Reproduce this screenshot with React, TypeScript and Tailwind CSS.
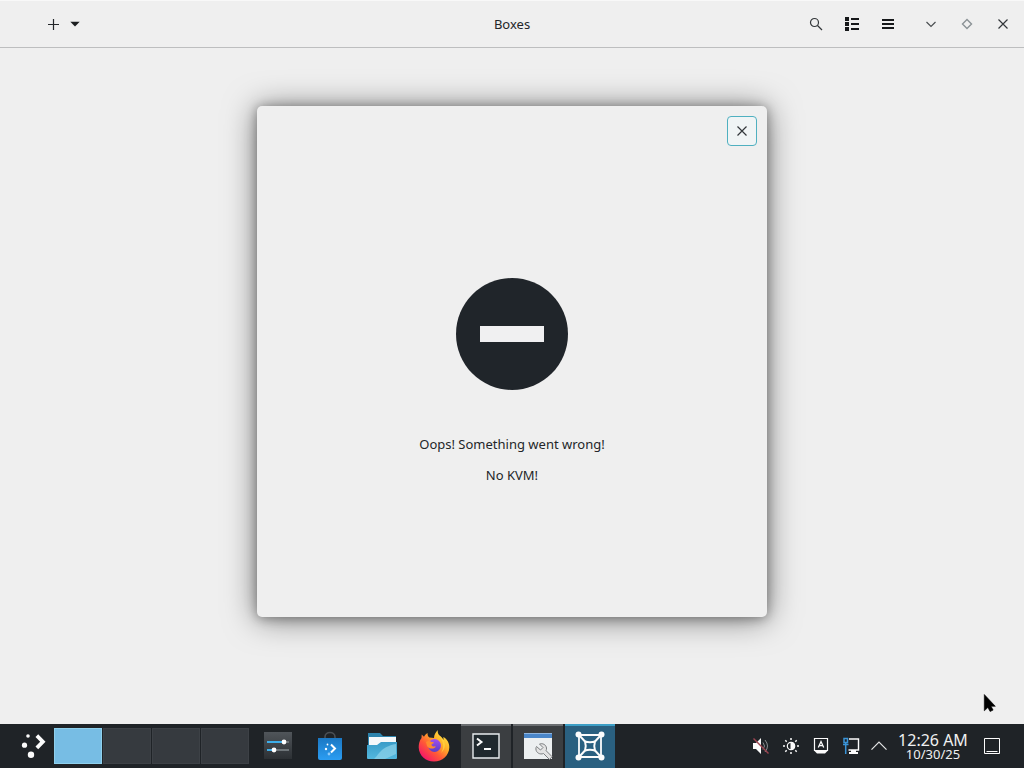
import React from "react";

const launchers = [
  { name: "System Settings", icon: <SettingsIcon /> },
  { name: "Discover", icon: <DiscoverIcon /> },
  { name: "Files", icon: <FilesIcon /> },
  { name: "Firefox", icon: <FirefoxIcon /> },
];

const tray = [
  { name: "Volume muted", icon: <VolumeIcon /> },
  { name: "Brightness", icon: <BrightnessIcon /> },
  { name: "Keyboard", icon: <KeyboardIcon /> },
  { name: "Network", icon: <NetworkIcon /> },
];

export default function App() {
  return (
    <div className="relative flex min-h-screen flex-col bg-[#efefef] font-['Noto_Sans',sans-serif] text-[13px] text-[#232629]">
      <Header />
      <main className="flex flex-1 items-start justify-center px-4 pt-[58px] pb-[107px]">
        <ErrorDialog />
      </main>
      <Taskbar />
      <Cursor />
    </div>
  );
}

function Header() {
  return (
    <header className="grid h-12 grid-cols-[1fr_auto_1fr] items-center border-t border-b border-t-[#f8f8f8] border-b-[#bdbebf] bg-[#efefef]">
      <div className="flex items-center pl-[38px]">
        <button aria-label="New box" className="flex h-9 items-center gap-[10px] px-2">
          <svg width="14" height="14" viewBox="0 0 14 14" stroke="#232629" strokeWidth="1.2">
            <path d="M7.5 2v11M2 7.5h11" />
          </svg>
          <svg width="10" height="6" viewBox="0 0 10 6" fill="#1b1e20">
            <path d="M0.3 0.7h9.4L5 5.5z" />
          </svg>
        </button>
      </div>
      <h1 className="pt-px">Boxes</h1>
      <div className="flex items-center justify-end pr-[3px]">
        <button aria-label="Search" className="flex size-9 items-center justify-center">
          <svg width="16" height="16" viewBox="0 0 16 16" fill="none" stroke="#33373a" strokeWidth="1.2">
            <circle cx="6.5" cy="6.5" r="4" />
            <path d="M9.5 9.5l4.5 4.5" />
          </svg>
        </button>
        <button aria-label="List view" className="flex size-9 items-center justify-center">
          <svg width="16" height="16" viewBox="0 0 16 16" fill="#16181a">
            <path d="M1 1h4v4H1zM1 6h4v4H1zM1 11h4v4H1zM7 2h8v2H7zM7 7h8v2H7zM7 12h8v2H7z" />
          </svg>
        </button>
        <button aria-label="Menu" className="flex size-9 items-center justify-center">
          <svg width="16" height="16" viewBox="0 0 16 16" fill="#16181a">
            <path d="M2 3h12v2H2zM2 7h12v2H2zM2 11h12v2H2z" />
          </svg>
        </button>
        <div className="flex pl-[7px]">
          <button aria-label="Minimize" className="flex size-9 items-center justify-center">
            <svg width="16" height="16" viewBox="0 0 16 16" fill="none" stroke="#4a4e51" strokeWidth="1.2">
              <path d="M3.5 6l4.5 4.5L12.5 6" />
            </svg>
          </button>
          <button aria-label="Maximize" className="flex size-9 items-center justify-center">
            <svg width="16" height="16" viewBox="0 0 16 16" fill="none" stroke="#8b9296" strokeWidth="1.4">
              <path d="M8 3.5l4.5 4.5L8 12.5 3.5 8z" />
            </svg>
          </button>
          <button aria-label="Close window" className="flex size-9 items-center justify-center">
            <CloseIcon />
          </button>
        </div>
      </div>
    </header>
  );
}

function ErrorDialog() {
  return (
    <section
      role="dialog"
      aria-label="Error"
      className="relative flex min-h-[511px] w-full max-w-[510px] flex-col items-center rounded-[5px] bg-[#efefef] pt-[172px] shadow-[0_2px_32px_rgba(0,0,0,0.5),0_1px_12px_rgba(0,0,0,0.35)]"
    >
      <button
        aria-label="Close"
        className="absolute top-[10px] right-[10px] flex size-[30px] items-center justify-center rounded-[4px] border border-[#4fb0c0] bg-[#f0f4f5]"
      >
        <CloseIcon />
      </button>
      <svg width="112" height="112" viewBox="0 0 112 112">
        <circle cx="56" cy="56" r="56" fill="#20252a" />
        <path d="M24 48h64v16H24z" fill="#f0f0f1" />
      </svg>
      <p className="mt-[45px] leading-[18px]">Oops! Something went wrong!</p>
      <p className="mt-[13px] leading-[18px]">No KVM!</p>
    </section>
  );
}

function Taskbar() {
  return (
    <footer className="flex h-11 items-stretch bg-[#1f2327] text-[#fcfcfc]">
      <button aria-label="Application launcher" className="flex w-[54px] items-center pl-[21px]">
        <svg width="26" height="26" viewBox="0 0 26 26" fill="#fcfcfc">
          <circle cx="7" cy="3" r="1.8" />
          <circle cx="3.5" cy="12.2" r="2.6" />
          <circle cx="10" cy="21.8" r="3.2" />
          <path d="M17.2 1.2L24.5 8.7l-7.3 7.5-2.7-2.7 4.7-4.8-4.7-4.8z" />
        </svg>
      </button>

      <div className="flex gap-px py-1">
        <button aria-label="Desktop 1" className="w-12 border border-[#8fd0ec] bg-[#77bde4]" />
        <button aria-label="Desktop 2" className="w-12 border border-[#3d4146] bg-[#363a3f]" />
        <button aria-label="Desktop 3" className="w-12 border border-[#3d4146] bg-[#363a3f]" />
        <button aria-label="Desktop 4" className="w-12 border border-[#3d4146] bg-[#363a3f]" />
      </div>

      <nav className="flex gap-[2px] pl-1">
        {launchers.map((item) => (
          <button key={item.name} aria-label={item.name} className="flex w-[50px] items-center justify-center">
            {item.icon}
          </button>
        ))}
        <button aria-label="Konsole" className="flex w-[50px] items-center justify-center border-t-2 border-[#6b6e71] bg-[#3b3e41] pb-[2px]">
          <KonsoleIcon />
        </button>
        <button aria-label="Window tools" className="flex w-[50px] items-center justify-center border-t-2 border-[#6b6e71] bg-[#3b3e41] pb-[2px]">
          <ToolsIcon />
        </button>
        <button aria-label="Boxes" className="flex w-[50px] items-center justify-center border-t-2 border-[#3d9fc6] bg-[#2a6080] pb-[2px]">
          <BoxesIcon />
        </button>
      </nav>

      <div className="ml-auto flex pr-[14px]">
        {tray.map((item) => (
          <button key={item.name} aria-label={item.name} className="flex w-[30px] items-center justify-center">
            {item.icon}
          </button>
        ))}
        <button aria-label="Show hidden icons" className="flex w-[26px] items-center justify-center">
          <svg width="18" height="18" viewBox="0 0 18 18" fill="none" stroke="#e4e5e6" strokeWidth="1.2">
            <path d="M1.5 12.7L9 5.2l7.5 7.5" />
          </svg>
        </button>
        <button className="flex w-[82px] flex-col items-center justify-center text-[#eff0f1]">
          <span className="text-[16px] leading-4">12:26 AM</span>
          <span className="text-[13px] leading-[13px]">10/30/25</span>
        </button>
        <button aria-label="Show desktop" className="flex w-9 items-center justify-center">
          <svg width="18" height="18" viewBox="0 0 18 18" fill="none" stroke="#fcfcfc">
            <path d="M1.5 1.5h15v15h-15zM3.5 14.5h11" />
          </svg>
        </button>
      </div>
    </footer>
  );
}

// pointer sits on top of everything
function Cursor() {
  return (
    <svg className="pointer-events-none absolute right-[28px] bottom-[54px]" width="13" height="21" viewBox="0 0 13 21">
      <path
        d="M1.3 1.5v16.3l3.6-3.3 2.2 4 3-1.4-2-3.8h4.2z"
        fill="#000"
        stroke="#000"
        strokeWidth="0.6"
      />
    </svg>
  );
}

function CloseIcon() {
  return (
    <svg width="16" height="16" viewBox="0 0 16 16" fill="none" stroke="#33373a" strokeWidth="1.2">
      <path d="M3.5 3.5l9 9M12.5 3.5l-9 9" />
    </svg>
  );
}

function SettingsIcon() {
  return (
    <svg width="32" height="32" viewBox="0 0 32 32">
      <defs>
        <linearGradient id="set" x1="0" y1="0" x2="0" y2="1">
          <stop offset="0" stopColor="#50555a" />
          <stop offset="1" stopColor="#2c3034" />
        </linearGradient>
      </defs>
      <path d="M2 2h28v27H2z" fill="url(#set)" />
      <path d="M5 12h18" stroke="#3daee9" strokeWidth="2" />
      <path d="M23 12h4M12 20h15" stroke="#6e7579" strokeWidth="2" />
      <path d="M5 20h7" stroke="#3daee9" strokeWidth="2" />
      <circle cx="22" cy="12" r="2.4" fill="#fff" />
      <circle cx="12" cy="20" r="2.4" fill="#fff" />
    </svg>
  );
}

function DiscoverIcon() {
  return (
    <svg width="32" height="32" viewBox="0 0 32 32">
      <defs>
        <linearGradient id="disc" x1="0" y1="0" x2="0" y2="1">
          <stop offset="0" stopColor="#1b78c4" />
          <stop offset="1" stopColor="#2b9df2" />
        </linearGradient>
      </defs>
      <path d="M11 10V7c0-6 10-6 10 0v3" fill="none" stroke="#4a4f54" strokeWidth="1.6" />
      <path d="M4 8h24v20a2 2 0 0 1-2 2H6a2 2 0 0 1-2-2z" fill="url(#disc)" />
      <path d="M17 14.5l4 4-4 4" fill="none" stroke="#fff" strokeWidth="2" />
      <circle cx="13.5" cy="14.5" r="0.9" fill="#fff" />
      <circle cx="12" cy="19" r="1.2" fill="#fff" />
      <circle cx="15" cy="24" r="1.4" fill="#8ecbfa" />
    </svg>
  );
}

function FilesIcon() {
  return (
    <svg width="32" height="32" viewBox="0 0 32 32">
      <defs>
        <linearGradient id="fold" x1="0" y1="0" x2="0" y2="1">
          <stop offset="0" stopColor="#3a9cc8" />
          <stop offset="1" stopColor="#53b8de" />
        </linearGradient>
      </defs>
      <path d="M2 3h12l3 3h13v18H2z" fill="#2d83ac" />
      <path d="M3 7h27v10H3z" fill="#f5f8fa" />
      <path d="M1 15h10l4-3h16v16a1 1 0 0 1-1 1H2a1 1 0 0 1-1-1z" fill="url(#fold)" />
      <path d="M8 29C13 25 14 17 30 14v10L19 29z" fill="#8fd3ea" opacity="0.7" />
    </svg>
  );
}

function FirefoxIcon() {
  return (
    <svg width="32" height="32" viewBox="0 0 32 32">
      <defs>
        <linearGradient id="fox" x1="0.9" y1="0.05" x2="0.15" y2="0.9">
          <stop offset="0" stopColor="#ffee4a" />
          <stop offset="0.35" stopColor="#ffb028" />
          <stop offset="0.65" stopColor="#ff5a36" />
          <stop offset="1" stopColor="#f4156a" />
        </linearGradient>
        <linearGradient id="globe" x1="0" y1="0" x2="0" y2="1">
          <stop offset="0" stopColor="#a14ff0" />
          <stop offset="1" stopColor="#5b3fc4" />
        </linearGradient>
      </defs>
      <path
        d="M20 0c-1 3 1 5 3 7 1 1 2 2 2.5 3 0-1 0-2-.2-3C29 9 31.5 13 31.3 17.5 31 25.5 24.5 31.5 16 31.5S1 25.5 .7 17.5C.6 14 1.5 10.5 3.5 8L3.7 4.5 6 6.8C7 5 8 4 9.5 3 9.5 5 10 6.5 11.5 7.5L16 8c0-3 1.5-6 4-8z"
        fill="url(#fox)"
      />
      <circle cx="16.5" cy="15.5" r="6.5" fill="url(#globe)" />
      <path
        d="M8 12c1.5-1.2 4-1.2 5.500 0 1.500 0 2.500.2 2.500.8s-2 1-2.600 1.900c.5 1.600 1.800 2 3 1.700 1-.3 1.500.2 1 .8-2.300 2.300-7 1.500-8.400-1.200z"
        fill="#ff8a2e"
      />
      <path d="M21 5c4 6 6 12 2 18 6-5 5-13-2-18z" fill="#ffd23e" opacity="0.8" />
    </svg>
  );
}

function KonsoleIcon() {
  return (
    <svg width="32" height="32" viewBox="0 0 32 32" fill="none">
      <path d="M3 4h26v24H3z" fill="#20292e" stroke="#e8ecee" strokeWidth="1.4" />
      <path d="M7 8.5l4.5 3.5-4.5 3.5" stroke="#fcfcfc" strokeWidth="2" />
      <path d="M14 19h7" stroke="#fcfcfc" strokeWidth="2" />
    </svg>
  );
}

function ToolsIcon() {
  return (
    <svg width="32" height="32" viewBox="0 0 32 32">
      <path d="M2 4h28v25H2z" fill="#eceff0" />
      <path d="M2 3h28v5H2z" fill="#4a86c9" />
      <path d="M2 3h28v1H2z" fill="#8fb5df" />
      <path
        d="M14.5 16.5l4 3.5 2.5-2.5-3.5-3.5c3-1 6.5.5 7 4 .1 1-.1 2-.4 2.7l6 6-2.6 2.8-6-6c-3.5 1.5-7.5-.8-7.6-4.5 0-1 .1-1.7.6-2.5z"
        fill="#e3e3e3"
        stroke="#7c7f81"
      />
    </svg>
  );
}

function BoxesIcon() {
  return (
    <svg width="32" height="32" viewBox="0 0 32 32" fill="none" stroke="#fcfcfc">
      <path d="M5 5h22v22H5z" strokeWidth="1.8" />
      <path d="M11 11.5q5 1.5 10 0q-1.5 4.5 0 9q-5-1.5-10 0q1.5-4.5 0-9z" strokeWidth="2" />
      <path d="M5 5l6 6.5M27 5l-6 6.5M5 27l6-6.5M27 27l-6-6.5" strokeWidth="2" />
      <g fill="#fcfcfc" stroke="none">
        <circle cx="4.5" cy="4.5" r="3" />
        <circle cx="27.5" cy="4.5" r="3" />
        <circle cx="4.5" cy="27.5" r="3" />
        <circle cx="27.5" cy="27.5" r="3" />
      </g>
    </svg>
  );
}

function VolumeIcon() {
  return (
    <svg width="18" height="18" viewBox="0 0 18 18" fill="none">
      <path d="M1 6h3l5-5v16l-5-5H1z" fill="#fcfcfc" />
      <path d="M11 5.5q3 3.5 0 7M13 3q5 6 0 12" stroke="#8a8d90" />
      <path d="M1.5 1.5l15 15" stroke="#9c4450" strokeWidth="1.4" />
    </svg>
  );
}

function BrightnessIcon() {
  return (
    <svg width="18" height="18" viewBox="0 0 18 18" fill="none" stroke="#fcfcfc">
      <circle cx="9" cy="9" r="3.7" strokeWidth="1.2" />
      <path d="M9 5.3a3.7 3.7 0 0 1 0 7.4z" fill="#fcfcfc" />
      <path
        d="M9 1v2M9 15v2M1 9h2M15 9h2M3.3 3.3l1.4 1.4M13.3 13.3l1.4 1.4M14.7 3.3l-1.4 1.4M4.7 13.3l-1.4 1.4"
        strokeWidth="1.5"
      />
    </svg>
  );
}

function KeyboardIcon() {
  return (
    <svg width="18" height="18" viewBox="0 0 18 18" fill="none" stroke="#fcfcfc">
      <path d="M2.5 1.5h13v12h-13z" strokeWidth="1.2" />
      <path d="M2 13.5h14l-3 3H5z" fill="#fcfcfc" stroke="none" />
      <path d="M6.3 10.5L9 4.5l2.7 6M7.2 8.7h3.6" strokeWidth="1.3" />
    </svg>
  );
}

function NetworkIcon() {
  return (
    <svg width="18" height="18" viewBox="0 0 18 18" fill="none">
      <path d="M7 2h9.5v11H6.5" stroke="#fcfcfc" strokeWidth="1.4" />
      <path d="M9 13h5v2h2v2H7v-2h2z" fill="#fcfcfc" />
      <path d="M2 1.5h3.5v4H2zM3.7 5.5v3M1 7.5h5.5M3.7 8v9" stroke="#3a94d8" strokeWidth="1.5" />
    </svg>
  );
}
